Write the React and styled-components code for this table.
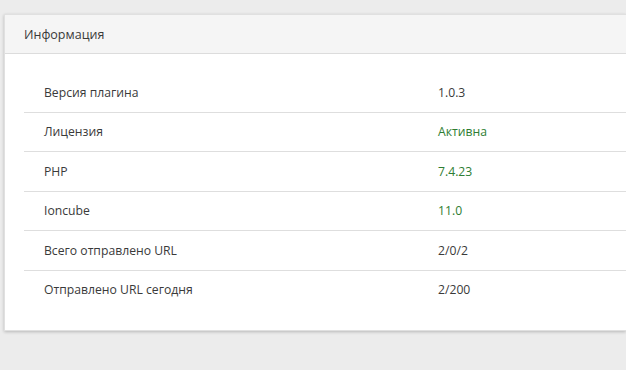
import React from 'react'
import styled, { createGlobalStyle } from 'styled-components'

const GlobalStyle = createGlobalStyle`
  html, body {
    margin: 0;
    padding: 0;
    background: #ececec;
    overflow: hidden;
  }
  body {
    font-family: "Open Sans", "Noto Sans", sans-serif;
    color: #333;
  }
`

const rows = [
  { label: 'Версия плагина', value: '1.0.3' },
  { label: 'Лицензия', value: 'Активна', ok: true },
  { label: 'PHP', value: '7.4.23', ok: true },
  { label: 'Ioncube', value: '11.0', ok: true },
  { label: 'Всего отправлено URL', value: '2/0/2' },
  { label: 'Отправлено URL сегодня', value: '2/200' },
]

const App = () => {
  return (
    <Page>
      <GlobalStyle />
      <Card>
        <CardHeader>Информация</CardHeader>
        <CardBody>
          <InfoTable>
            {rows.map((row, i) => (
              <Row key={row.label} $last={i === rows.length - 1}>
                <Label>{row.label}</Label>
                <Value $ok={row.ok}>{row.value}</Value>
              </Row>
            ))}
          </InfoTable>
        </CardBody>
      </Card>
    </Page>
  )
}

const Page = styled.div`
  width: 626px;
  height: 370px;
  padding: 14px 0 0 4px;
  box-sizing: border-box;
  overflow: hidden;
`

const Card = styled.div`
  background: #fff;
  border: 1px solid #e0e0e0;
  border-right: none;
  box-shadow: 0 1px 3px rgba(0, 0, 0, 0.22);
`

const CardHeader = styled.div`
  height: 38px;
  display: flex;
  align-items: center;
  padding-left: 19px;
  background: #f5f5f5;
  border-bottom: 1px solid #dcdcdc;
  font-size: 12.5px;
  color: #3a3a3a;
`

const CardBody = styled.div`
  padding: 19px 0 21px 19px;
`

const InfoTable = styled.div`
  display: flex;
  flex-direction: column;
`

const Row = styled.div`
  display: grid;
  grid-template-columns: 414px 1fr;
  height: 38.5px;
  padding-top: 1px;
  box-sizing: content-box;
  align-items: center;
  border-bottom: ${props => props.$last ? 'none' : '1px solid #dedede'};
  font-size: 12.2px;
  margin-top: -1px;
`

const Label = styled.div`
  padding-left: 20px;
  color: #3a3a3a;
`

const Value = styled.div`
  color: ${props => props.$ok ? '#2e7d32' : '#3a3a3a'};
`

export default App
